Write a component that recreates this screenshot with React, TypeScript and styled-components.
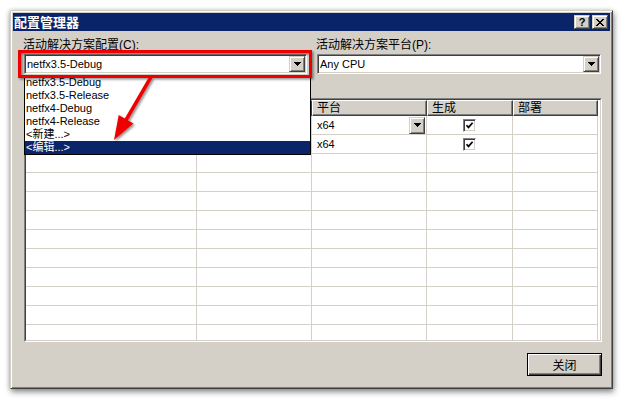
import React from "react";
import styled, { createGlobalStyle, css } from "styled-components";

const face = "#d4d0c8";
const navy = "#0a246a";

const GlobalStyle = createGlobalStyle`
  html, body {
    margin: 0;
    padding: 0;
    background: #fff;
  }
  body {
    font-family: "Liberation Sans", "Noto Sans CJK SC", sans-serif;
    color: #000;
  }
  * {
    box-sizing: border-box;
  }
`;

const raised = css`
  border: 1px solid;
  border-color: ${face} #404040 #404040 ${face};
  box-shadow: inset 1px 1px #fff, inset -1px -1px #808080;
  background: ${face};
`;

const Page = styled.div`
  position: relative;
  width: 625px;
  height: 400px;
  padding: 10px 0 0 10px;
  overflow: hidden;
`;

const Window = styled.div`
  width: 603px;
  border: 1px solid;
  border-color: ${face} #404040 #404040 ${face};
  box-shadow: inset 1px 1px #fff, inset -1px -1px #808080,
    1px 3px 6px rgba(0, 0, 0, 0.45), -1px 0 4px rgba(0, 0, 0, 0.15);
  padding: 2px;
  background: ${face};
  display: flex;
  flex-direction: column;
`;

const TitleBar = styled.div`
  height: 18px;
  background: ${navy};
  display: flex;
  align-items: center;
  padding: 0 2px 0 1px;
`;

const TitleText = styled.div`
  flex: 1;
  color: #fff;
  font-family: "Noto Sans CJK SC", sans-serif;
  font-weight: bold;
  font-size: 13px;
  line-height: 18px;
`;

const TitleButtons = styled.div`
  display: flex;
  gap: 2px;
`;

const CaptionButton = styled.div`
  ${raised};
  width: 16px;
  height: 14px;
  display: flex;
  align-items: center;
  justify-content: center;
  font-family: "Liberation Sans", sans-serif;
  font-weight: bold;
  font-size: 11px;
  line-height: 12px;
`;

const Body = styled.div`
  padding: 6px 8px 10px 11px;
  display: flex;
  flex-direction: column;
`;

const TopRow = styled.div`
  display: grid;
  grid-template-columns: 283px 284px;
  column-gap: 10px;
`;

const Field = styled.div`
  position: relative;
  display: flex;
  flex-direction: column;
`;

const Label = styled.div`
  font-size: 12px;
  line-height: 16px;
  margin-left: -1px;
  white-space: nowrap;
`;

const Combo = styled.div`
  margin-top: 1px;
  height: 20px;
  border: 1px solid;
  border-color: #808080 #fff #fff #808080;
  box-shadow: inset 1px 1px #404040, inset -1px -1px ${face};
  padding: 1px;
  background: #fff;
  display: flex;
  align-items: center;
`;

const ComboText = styled.div`
  flex: 1;
  padding-left: 1px;
  font-size: 11px;
  line-height: 16px;
  white-space: nowrap;
`;

const DropButton = styled.div<{ $h: number }>`
  ${raised};
  width: 16px;
  height: ${(p) => p.$h}px;
  flex: none;
  display: flex;
  align-items: center;
  justify-content: center;
`;

const ListPopup = styled.ul`
  position: absolute;
  left: 0;
  top: 38px;
  width: 287px;
  margin: 0;
  padding: 0;
  list-style: none;
  border: 1px solid #000;
  background: #fff;
  z-index: 2;
`;

const ListItem = styled.li<{ $selected?: boolean }>`
  height: 13px;
  line-height: 13px;
  padding-left: 1px;
  font-size: 11px;
  white-space: nowrap;
  background: ${(p) => (p.$selected ? navy : "transparent")};
  color: ${(p) => (p.$selected ? "#fff" : "#000")};
`;

const GridFrame = styled.div`
  margin-top: 24px;
  height: 244px;
  border: 1px solid;
  border-color: #808080 #fff #fff #808080;
`;

const GridInner = styled.div`
  height: 100%;
  border: 1px solid;
  border-color: #404040 ${face} ${face} #404040;
  background: #fff;
  overflow: hidden;
`;

const GridTable = styled.div`
  display: grid;
  grid-template-columns: 171px 115px 115px 86px 85px;
  grid-template-rows: 16px;
  grid-auto-rows: 19px;
`;

const HeaderCell = styled.div`
  border: 1px solid;
  border-color: #fff #404040 #404040 #fff;
  box-shadow: inset -1px -1px #808080;
  background: ${face};
  padding-left: 4px;
  font-size: 12px;
  line-height: 14px;
  white-space: nowrap;
  overflow: hidden;
`;

const Cell = styled.div<{ $center?: boolean }>`
  border-right: 1px solid ${face};
  border-bottom: 1px solid ${face};
  display: flex;
  align-items: center;
  justify-content: ${(p) => (p.$center ? "center" : "space-between")};
  padding-left: ${(p) => (p.$center ? 0 : 5)}px;
  padding-right: 1px;
  font-size: 11px;
  white-space: nowrap;
  overflow: hidden;
`;

const CheckBox = styled.div`
  width: 13px;
  height: 13px;
  border: 1px solid;
  border-color: #808080 #fff #fff #808080;
  box-shadow: inset 1px 1px #404040, inset -1px -1px ${face};
  background: #fff;
  display: flex;
  align-items: center;
  justify-content: center;
`;

const Footer = styled.div`
  margin-top: 11px;
  display: flex;
  justify-content: flex-end;
`;

const CloseButton = styled.button`
  width: 75px;
  height: 23px;
  padding: 0;
  border: 1px solid #000;
  background: ${face};
  box-shadow: inset 1px 1px #fff, inset -1px -1px #404040,
    inset -2px -2px #808080;
  font-family: "Noto Sans CJK SC", sans-serif;
  font-size: 12px;
  color: #000;
`;

const Annotation = styled.svg`
  position: absolute;
  left: 0;
  top: 0;
  pointer-events: none;
  z-index: 5;
`;

const Arrow = () => (
  <svg width="7" height="4" viewBox="0 0 7 4" shapeRendering="crispEdges">
    <polygon points="0,0 7,0 3.5,4" fill="#000" />
  </svg>
);

const Check = () => (
  <svg width="9" height="9" viewBox="0 0 9 9">
    <path d="M1.5 4.2 L3.5 6.4 L7.6 1.8" fill="none" stroke="#000" strokeWidth="1.7" />
  </svg>
);

const configs = [
  "netfx3.5-Debug",
  "netfx3.5-Release",
  "netfx4-Debug",
  "netfx4-Release",
  "<新建...>",
  "<编辑...>",
];

// project and config columns sit under the open drop-down, so they stay blank here
type Row = {
  platform: string;
  build: boolean;
  editing?: boolean;
};

const rows: Row[] = [
  { platform: "x64", build: true, editing: true },
  { platform: "x64", build: true },
];

const emptyRows = Array.from({ length: 10 }, (_, i) => i);

export default function App() {
  return (
    <Page>
      <GlobalStyle />
      <Window>
        <TitleBar>
          <TitleText>配置管理器</TitleText>
          <TitleButtons>
            <CaptionButton>?</CaptionButton>
            <CaptionButton>
              <svg width="8" height="7" viewBox="0 0 8 7" shapeRendering="crispEdges">
                <path d="M0 0h2v1h-2zM6 0h2v1h-2zM1 1h2v1h-2zM5 1h2v1h-2zM2 2h4v1h-4zM3 3h2v1h-2zM2 4h4v1h-4zM1 5h2v1h-2zM5 5h2v1h-2zM0 6h2v1h-2zM6 6h2v1h-2z" fill="#000" />
              </svg>
            </CaptionButton>
          </TitleButtons>
        </TitleBar>
        <Body>
          <TopRow>
            <Field>
              <Label>活动解决方案配置(C):</Label>
              <Combo>
                <ComboText>netfx3.5-Debug</ComboText>
                <DropButton $h={16}>
                  <Arrow />
                </DropButton>
              </Combo>
              <ListPopup>
                {configs.map((c, i) => (
                  <ListItem key={c} $selected={i === configs.length - 1}>
                    {c}
                  </ListItem>
                ))}
              </ListPopup>
            </Field>
            <Field>
              <Label>活动解决方案平台(P):</Label>
              <Combo>
                <ComboText>Any CPU</ComboText>
                <DropButton $h={16}>
                  <Arrow />
                </DropButton>
              </Combo>
            </Field>
          </TopRow>
          <GridFrame>
            <GridInner>
              <GridTable>
                <HeaderCell />
                <HeaderCell />
                <HeaderCell>平台</HeaderCell>
                <HeaderCell>生成</HeaderCell>
                <HeaderCell>部署</HeaderCell>
                {rows.map((r, i) => (
                  <React.Fragment key={i}>
                    <Cell />
                    <Cell />
                    <Cell>
                      {r.platform}
                      {r.editing && (
                        <DropButton $h={17}>
                          <Arrow />
                        </DropButton>
                      )}
                    </Cell>
                    <Cell $center>
                      <CheckBox>{r.build && <Check />}</CheckBox>
                    </Cell>
                    <Cell />
                  </React.Fragment>
                ))}
                {emptyRows.map((i) => (
                  <React.Fragment key={i}>
                    <Cell />
                    <Cell />
                    <Cell />
                    <Cell />
                    <Cell />
                  </React.Fragment>
                ))}
              </GridTable>
            </GridInner>
          </GridFrame>
          <Footer>
            <CloseButton>关闭</CloseButton>
          </Footer>
        </Body>
      </Window>
      <Annotation width="625" height="400" viewBox="0 0 625 400">
        <defs>
          <filter id="shade" x="-10%" y="-10%" width="130%" height="130%">
            <feDropShadow dx="1.5" dy="1.5" stdDeviation="1" floodColor="#000" floodOpacity="0.45" />
          </filter>
        </defs>
        <g filter="url(#shade)">
          <rect x="19.5" y="51.5" width="291" height="25" fill="none" stroke="#ee0000" strokeWidth="3" />
          <line x1="151" y1="77" x2="126" y2="120" stroke="#ee0000" strokeWidth="3.5" />
          <polygon points="114,140 118.7,115 133.4,123.5" fill="#ee0000" />
        </g>
      </Annotation>
    </Page>
  );
}
